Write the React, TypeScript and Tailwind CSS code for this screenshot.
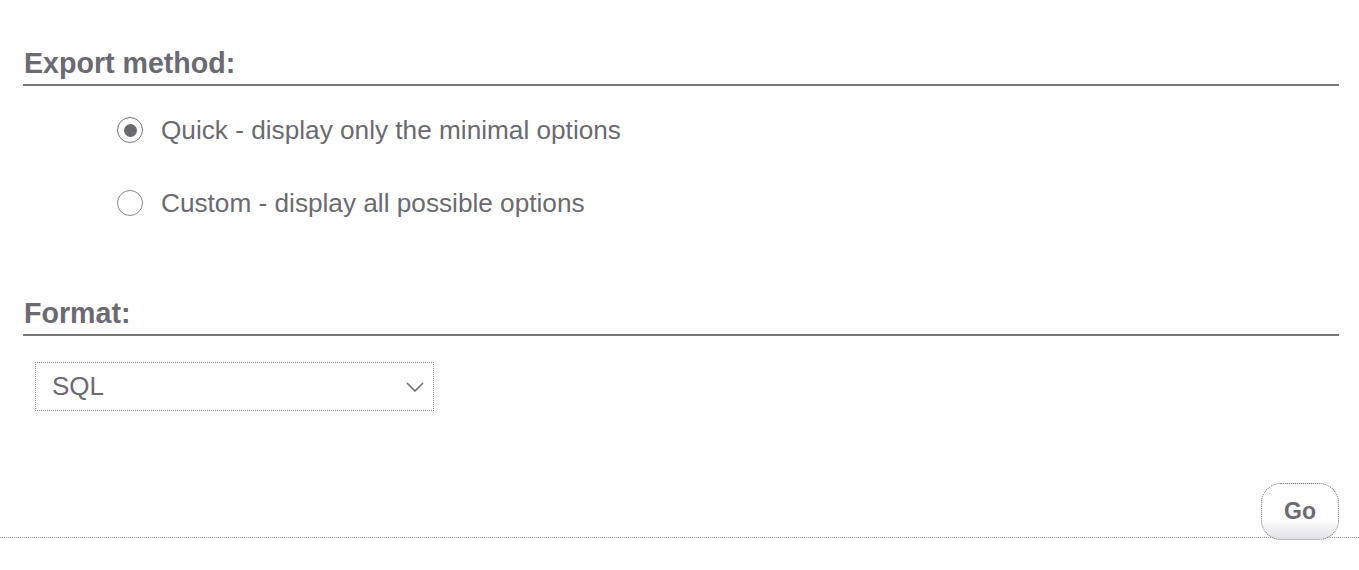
export default function App() {
  return (
    <main className="min-h-[570px] bg-white font-['Liberation_Sans',Arial,sans-serif] text-[#6b6a72]">
      <div className="pl-[23px] pr-[20px] pt-[46px]">
        <h2 className="border-b-2 border-[#77767d] pb-[4px] pl-px text-[28.6px] font-bold leading-[34px]">
          Export method:
        </h2>

        <div className="mt-[29px] flex flex-col gap-[43px] pl-[94px]">
          <label className="flex h-[30px] items-center gap-[18px] text-[26.2px] leading-[30px]">
            <span className="flex h-[26px] w-[26px] items-center justify-center rounded-full border border-[#77767d]">
              <span className="h-[13px] w-[13px] rounded-full bg-[#6b6a72]" />
            </span>
            Quick - display only the minimal options
          </label>
          <label className="flex h-[30px] items-center gap-[18px] text-[26.2px] leading-[30px]">
            <span className="h-[26px] w-[26px] rounded-full border border-[#8a8990]" />
            Custom - display all possible options
          </label>
        </div>

        <h2 className="mt-[78px] border-b-2 border-[#77767d] pb-[4px] pl-px text-[28.6px] font-bold leading-[34px]">
          Format:
        </h2>

        <div className="ml-[12px] mt-[26px] flex h-[49px] w-[399px] items-center justify-between border border-dotted border-[#8a8990] pl-[16px] pr-[9px] text-[26px]">
          <span>SQL</span>
          <svg width="18" height="10" viewBox="0 0 18 10" fill="none" stroke="#6b6a72" strokeWidth="1.6">
            <path d="M1 1l8 8 8-8" />
          </svg>
        </div>
      </div>

      <div className="mt-[72px] flex h-[55px] justify-end border-b border-dotted border-[#9a99a0] pr-[20px]">
        <button className="-mb-[3px] flex h-[57px] w-[78px] items-center justify-center rounded-[20px] border border-dotted border-[#77767d] bg-gradient-to-b from-white from-65% to-[#e2e2e6] text-[23px] font-bold text-[#6b6a72]">
          Go
        </button>
      </div>
    </main>
  );
}
